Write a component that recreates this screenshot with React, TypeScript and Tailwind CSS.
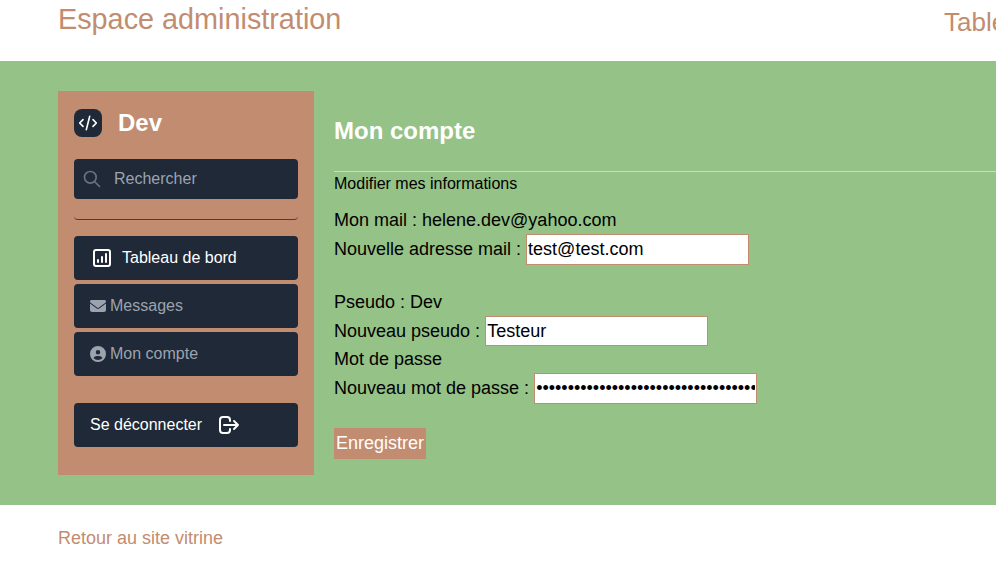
import React from "react";
import { FaEnvelope, FaCircleUser } from "react-icons/fa6";

type IconProps = { d: string; className: string };

function StrokeIcon({ d, className }: IconProps) {
  return (
    <svg className={className} fill="none" viewBox="0 0 24 24" stroke="currentColor" strokeWidth={2} strokeLinecap="round" strokeLinejoin="round">
      <path d={d} />
    </svg>
  );
}

function Sidebar() {
  return (
    <aside className="h-96 w-64 shrink-0 bg-[#c28c70] px-4 pt-[18px] text-base">
      <div className="flex h-7 items-center">
        <div className="size-7 rounded-lg bg-[#1f2937] p-1 text-white">
          <StrokeIcon className="size-5" d="M10 20l4-16m4 4l4 4-4 4M6 16l-4-4 4-4" />
        </div>
        <h1 className="ml-4 text-2xl font-bold text-white">Dev</h1>
      </div>
      <label className="mt-[22px] flex h-10 items-center rounded bg-[#1f2937] pl-2 text-[#6b7280]">
        <StrokeIcon className="size-5" d="M21 21l-6-6m2-5a7 7 0 11-14 0 7 7 0 0114 0z" />
        <input className="ml-3 h-6 w-44 bg-transparent text-base outline-none placeholder:text-[#9ca3af]" placeholder="Rechercher" />
      </label>
      <div className="mt-2 h-[13px] rounded border-b border-[#374151]" />
      <nav className="mt-4 flex flex-col gap-1 text-[#9ca3af]">
        <a className="flex h-11 items-center rounded bg-[#1f2937] pl-4 text-white">
          <StrokeIcon className="size-6" d="M16 8v8m-4-5v5m-4-2v2m-2 4h12a2 2 0 002-2V6a2 2 0 00-2-2H6a2 2 0 00-2 2v12a2 2 0 002 2z" />
          <span className="ml-2">Tableau de bord</span>
        </a>
        <a className="flex h-11 items-center rounded bg-[#1f2937] pl-4">
          <FaEnvelope className="mr-1 size-4" />
          Messages
        </a>
        <a className="flex h-11 items-center rounded bg-[#1f2937] pl-4">
          <FaCircleUser className="mr-1 size-4" />
          Mon compte
        </a>
      </nav>
      <a className="mt-[27px] flex h-11 items-center rounded bg-[#1f2937] pl-4 text-white">
        Se déconnecter
        <StrokeIcon className="ml-[15px] size-6" d="M17 16l4-4m0 0l-4-4m4 4H7m6 4v1a3 3 0 01-3 3H6a3 3 0 01-3-3V7a3 3 0 013-3h4a3 3 0 013 3v1" />
      </a>
    </aside>
  );
}

export default function App() {
  return (
    <div className="h-[567px] overflow-hidden bg-white font-['Liberation_Sans',Arial,sans-serif] text-lg text-black">
      <header className="flex h-[61px] justify-between overflow-hidden whitespace-nowrap pl-[58px] text-[#c28c70]">
        <h1 className="pt-px text-[28.8px] leading-9">Espace administration</h1>
        <h2 className="w-[52px] overflow-hidden pt-1 text-[26px] leading-9">Tableau de bord</h2>
      </header>
      <main className="flex h-[444px] bg-[#95c286] pl-[58px] pt-[30px]">
        <Sidebar />
        <section className="ml-5 min-w-0 flex-1">
          <h2 className="h-[81px] border-b border-[#d1d5db] pt-6 text-2xl font-bold text-white">Mon compte</h2>
          <p className="text-base leading-6">Modifier mes informations</p>
          <form>
            <p className="mt-2.5 h-7 leading-[29px]">Mon mail : helene.dev@yahoo.com</p>
            <label className="flex h-[31px] items-start whitespace-pre leading-[29px]">
              <span className="pt-px">{"Nouvelle adresse mail : "}</span>
              <input className="h-[31px] w-[223px] border border-[#c28c70] bg-white px-px leading-7 outline-none" type="email" defaultValue="test@test.com" />
            </label>
            <p className="mt-[23px] h-7 leading-7">Pseudo : Dev</p>
            <label className="flex h-[30px] items-center whitespace-pre">
              {"Nouveau pseudo : "}
              <input className="h-[30px] w-[223px] border border-[#c28c70] bg-white px-px outline-none" defaultValue="Testeur" />
            </label>
            <p className="h-[27px] leading-[27px]">Mot de passe</p>
            <label className="flex h-[31px] items-start whitespace-pre leading-[29px]">
              <span className="pt-px">{"Nouveau mot de passe : "}</span>
              <input className="h-[31px] w-[223px] border border-[#c28c70] bg-white px-px leading-7 outline-none" type="password" defaultValue={"x".repeat(60)} />
            </label>
            <button type="button" className="mt-6 h-[31px] w-[92px] bg-[#c28c70] pb-0.5 text-white">Enregistrer</button>
          </form>
        </section>
      </main>
      <footer className="pl-[58px] pt-[19px] leading-7 text-[#c28c70]">Retour au site vitrine</footer>
    </div>
  );
}
